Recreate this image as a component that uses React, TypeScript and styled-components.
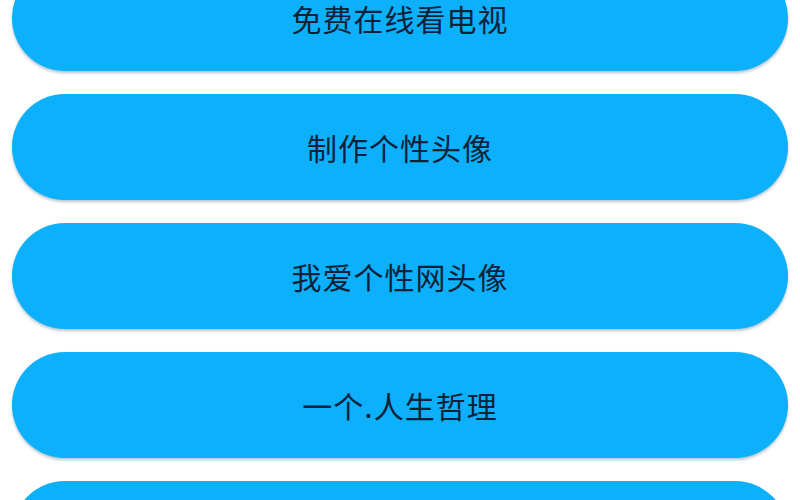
import React from "react";
import styled, { createGlobalStyle } from "styled-components";

const Global = createGlobalStyle`
  html, body {
    margin: 0;
    padding: 0;
    background: #ffffff;
    overflow: hidden;
  }
  body {
    font-family: "Noto Sans CJK SC", "Noto Sans", sans-serif;
  }
`;

const Screen = styled.div`
  width: 800px;
  height: 500px;
  overflow: hidden;
  background: #ffffff;
`;

const List = styled.div`
  display: flex;
  flex-direction: column;
  gap: 23px;
  padding: 0 12px;
  margin-top: -35px;
`;

const Pill = styled.button`
  display: flex;
  align-items: center;
  justify-content: center;
  height: 106px;
  width: 100%;
  border: none;
  border-radius: 53px;
  background: #0cb0fb;
  box-shadow: 0 2px 3px rgba(0, 60, 100, 0.3);
  color: #0b2238;
  font-family: "Noto Sans CJK SC", "Noto Sans", sans-serif;
  font-size: 30px;
  font-weight: 400;
  letter-spacing: 1px;
  cursor: pointer;
  padding: 0;
`;

const links = [
  "免费在线看电视",
  "制作个性头像",
  "我爱个性网头像",
  "一个.人生哲理",
  "每日一句英语",
];

export default function App() {
  return (
    <Screen>
      <Global />
      <List>
        {links.map((label) => (
          <Pill key={label}>{label}</Pill>
        ))}
      </List>
    </Screen>
  );
}
